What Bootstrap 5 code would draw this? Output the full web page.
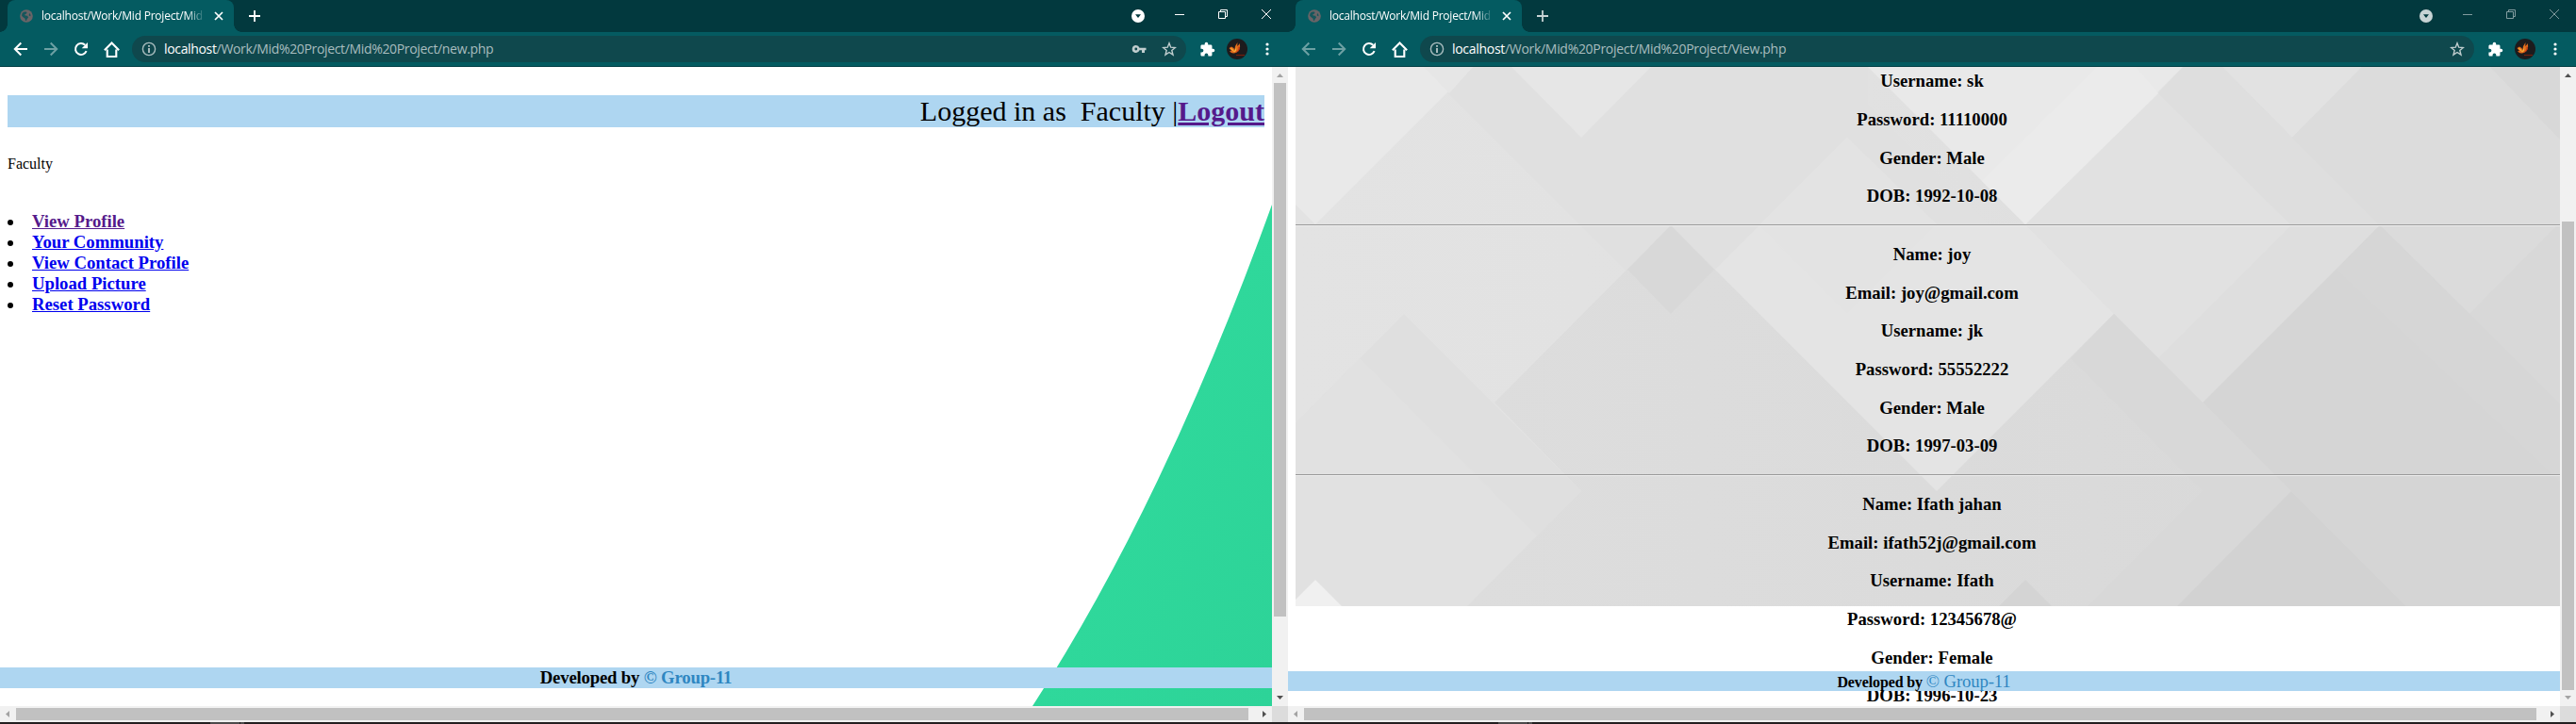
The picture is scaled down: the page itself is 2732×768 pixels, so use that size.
<!DOCTYPE html>
<html lang="en">
<head>
<meta charset="utf-8">
<title>Mid Project</title>
<link href="https://cdn.jsdelivr.net/npm/bootstrap@5.3.0/dist/css/bootstrap.min.css" rel="stylesheet">
<style>
body{width:2732px;height:768px;overflow:hidden;background:#fff;color:#000}
.win{width:1366px;height:768px}
.tabstrip{height:34px;background:#02393e;padding-left:8px;color:#fff}
.tabitem{width:240px;height:34px;background:#045b61;border-radius:8px 8px 0 0;padding-left:13px}
.tabitem::before,.tabitem::after{content:"";position:absolute;bottom:0;width:8px;height:8px}
.tabitem::before{left:-8px;background:radial-gradient(circle at 0 0,#02393e 7.5px,#045b61 8px)}
.tabitem::after{right:-8px;background:radial-gradient(circle at 100% 0,#02393e 7.5px,#045b61 8px)}
.tabtitle{font:12px/16px "Open Sans",sans-serif;letter-spacing:-.22px;width:175px;margin-left:9px;white-space:nowrap;overflow:hidden;-webkit-mask-image:linear-gradient(90deg,#000 154px,transparent 174px)}
.tabx{width:18px}
.capbtn{width:46px;height:29px}
.drop{width:42px}
.inactive .capbtn{opacity:.5}
.inactive .drop,.inactive .plus{opacity:.78}
.toolbar36{height:37px;background:#045b61;border-bottom:1px solid #023f45;padding:0 6px;color:#fff}
.tb{width:32px}
.dim{opacity:.42}
.omni{width:1118px;height:28px;border-radius:14px;background:#0f484d;margin:0 6px;padding:0 10px 0 10px;color:#a9bdbf}
.url{font:14px/20px "Open Sans",sans-serif;letter-spacing:-.34px;margin-left:8px;white-space:nowrap}
.inactive .url{letter-spacing:-.3px}
.url b{font-weight:400;color:#fff}
.view{height:678px}
.page{width:1349px;font-family:"Liberation Serif",serif}
.vbar{width:17px;background:#f1f1f1}
.hbar{height:17px;background:#f1f1f1}
.thumb{background:#c1c1c1}
.vbar .thumb{width:13px}
.hbar .thumb{height:13px}
.arr{width:17px;height:17px}
.corner{width:17px;height:17px;background:#dcdcdc}
.taskline{height:2px;background:linear-gradient(90deg,#231f20 223px,#4c4a4b 223px 254px,#231f20 254px 255px,#4c4a4b 255px 259px,#231f20 259px)}
.userband{margin:30px 8px 0;height:34px;background:#aed6f1;font-size:30px;line-height:34px;white-space:pre}
.userband a{font-weight:700;color:#551a8b}
.role{margin:30px 8px 41px;font-size:16px;line-height:18px}
.menu{margin:0 8px;font-size:18.72px;font-weight:700;line-height:22px}
.menu li::before{content:"";width:6px;height:6px;border-radius:50%;background:#000;margin:2px 20px 0 0}
.menu a{color:#00e}
.menu a.seen{color:#551a8b}
.foot{left:0;width:1349px;background:#aed6f1;font-weight:700;text-align:center;white-space:pre}
.foot span{color:#2e86c1}
.foot-a{bottom:19px;height:22px;font-size:18.72px;line-height:22px;letter-spacing:-.17px}
.foot-b{bottom:16px;height:21px;font-size:16px;line-height:21px;letter-spacing:-.12px}
.foot-b span{font-size:18.72px;font-weight:400}
.records{padding-top:4.2px;width:1366px;height:678px;font-size:18.72px;font-weight:700;text-align:center}
.records p{margin:0 0 18.72px;line-height:22px}
.rule{margin:0 0 18.72px 8px;width:1341px;height:2px;border-top:1px solid #9a9a9a;border-bottom:1px solid #eee}
.art{left:0;top:0}
.art.right{left:8px}
</style>
</head>
<body class="d-flex">
<svg width="0" height="0" class="position-absolute">
<defs>
<symbol id="globe" viewBox="0 0 16 16"><circle cx="8" cy="8" r="7.800" fill="#696467"/><path d="M3 4.600C5 2.800 7 2.600 8.600 3.400L8 5.200 6 6l.5 1.500 2.800.3 1 1.800-1.600 2-.6 1.900-1.300.2-.4-2.700L3.800 9.200 2.400 7.600C2.400 6.400 2.600 5.300 3 4.600zM11.500 4.400l1.700 2.400-.4 1.400-1.700-.8z" fill="#14565b"/></symbol>
<symbol id="close8" viewBox="0 0 10 10"><path d="M1 1l8 8M9 1L1 9" stroke="#fff" stroke-width="1.7"/></symbol>
<symbol id="plus" viewBox="0 0 12 12"><path d="M6 0v12M0 6h12" stroke="#fff" stroke-width="1.8"/></symbol>
<symbol id="drop" viewBox="0 0 14 14"><circle cx="7" cy="7" r="7" fill="#fff"/><path d="M4 5.200h6L7 9z" fill="#02393e"/></symbol>
<symbol id="min" viewBox="0 0 10 10"><path d="M0 5.500h10" stroke="#fff"/></symbol>
<symbol id="rest" viewBox="0 0 10 10"><path d="M.5 2.500h7v7h-7zM2.500 2.500V.5h7v7h-2" fill="none" stroke="#fff"/></symbol>
<symbol id="x10" viewBox="0 0 10 10"><path d="M0 0l10 10M10 0L0 10" stroke="#fff"/></symbol>
<symbol id="back" viewBox="0 0 16 16"><path d="M15 8H2M8.300 1.500L1.800 8l6.500 6.500" fill="none" stroke="#fff" stroke-width="2"/></symbol>
<symbol id="fwd" viewBox="0 0 16 16"><path d="M1 8h13M7.700 1.500L14.200 8l-6.500 6.500" fill="none" stroke="#fff" stroke-width="2"/></symbol>
<symbol id="reload" viewBox="0 0 16 16"><path d="M13.600 10.200a6 6 0 1 1-1.300-6.400" fill="none" stroke="#fff" stroke-width="2"/><path d="M15 1v6.300H8.700z" fill="#fff"/></symbol>
<symbol id="home" viewBox="0 0 16 16"><path d="M3.500 8v7h9V8M.8 8.600L8 1.400l7.200 7.200" fill="none" stroke="#fff" stroke-width="2"/></symbol>
<symbol id="info" viewBox="0 0 16 16"><circle cx="8" cy="8" r="6.600" fill="none" stroke="#a9bdbf" stroke-width="1.400"/><path d="M8 7v5M8 4v1.700" stroke="#c4d0d1" stroke-width="1.700"/></symbol>
<symbol id="key" viewBox="0 0 16 16"><path fill-rule="evenodd" d="M4.800 4a4 4 0 1 0 3.700 5.300H11V12h3V9.300h1.500V6.700H8.500A4 4 0 0 0 4.800 4zm0 2.600a1.400 1.400 0 1 1 0 2.800 1.400 1.400 0 0 1 0-2.800z" fill="#c0cdce"/></symbol>
<symbol id="star" viewBox="0 0 16 16"><path d="M8 1.800l1.700 4.400 4.700.3-3.600 3 1.200 4.600L8 11.500l-4 2.600 1.200-4.600-3.600-3 4.700-.3z" fill="none" stroke="#c0cdce" stroke-width="1.400"/></symbol>
<symbol id="puzzle" viewBox="0 0 24 24"><path d="M20.500 11H19V7c0-1.100-.9-2-2-2h-4V3.500a2.500 2.500 0 0 0-5 0V5H4c-1.100 0-2 .9-2 2v3.800h1.500a2.700 2.700 0 0 1 0 5.400H2V20c0 1.100.9 2 2 2h3.800v-1.500a2.700 2.700 0 0 1 5.400 0V22H17c1.100 0 2-.9 2-2v-4h1.500a2.500 2.500 0 0 0 0-5z" fill="#fff"/></symbol>
<symbol id="ava" viewBox="0 0 22 22"><circle cx="11" cy="11" r="11" fill="#1d1b1d"/><path d="M2.500 10l2.500-1.500L7.500 10l.8 2L9 8l2.500-4-.3 4 1.600-1.500L13.500 5c1.300 3.500.6 7.500-2.800 9.500-3.500 1.800-6.500.8-7.700-1.200l2-.3z" fill="#e06a1c"/><path d="M3.500 10l2.500.5 2 3 2.300-5-.3 4.500-2 1.500z" fill="#f3b13a"/><path d="M12.500 8.500c.7 3-.5 5-3.500 6 3.500 0 5-2.500 4.800-5.500z" fill="#b92c12"/><path d="M10 17.500h9" stroke="#74200f" stroke-width="1.200"/></symbol>
<symbol id="dots" viewBox="0 0 4 14"><circle cx="2" cy="2" r="1.600" fill="#fff"/><circle cx="2" cy="7" r="1.600" fill="#fff"/><circle cx="2" cy="12" r="1.600" fill="#fff"/></symbol>
<symbol id="up" viewBox="0 0 17 17"><path d="M5 11h7L8.500 7z"/></symbol>
<symbol id="down" viewBox="0 0 17 17"><path d="M5 6h7l-3.500 4z"/></symbol>
<symbol id="left" viewBox="0 0 17 17"><path d="M10 5v7L6 8.500z"/></symbol>
<symbol id="right" viewBox="0 0 17 17"><path d="M7 5v7l4-3.500z"/></symbol>
<linearGradient id="gr" x1="0" y1="0" x2="1" y2="1"><stop offset=".5" stop-color="#2fd89b"/><stop offset="1" stop-color="#2dd398"/></linearGradient>
<linearGradient id="base" x1="0" y1="0" x2="1" y2="0"><stop offset="0" stop-color="#e3e3e3"/><stop offset=".45" stop-color="#e1e1e1"/><stop offset="1" stop-color="#dadada"/></linearGradient>
<linearGradient id="low" x1="0" y1="0" x2="1" y2="0"><stop offset="0" stop-color="#dddddd"/><stop offset=".5" stop-color="#dbdbdb"/><stop offset="1" stop-color="#d8d8d8"/></linearGradient>
</defs></svg>

<section class="win d-flex flex-column flex-shrink-0">
  <div class="tabstrip d-flex align-items-start">
    <div class="tabitem position-relative d-flex align-items-center"><svg width="14" height="14"><use href="#globe"/></svg><span class="tabtitle">localhost/Work/Mid Project/Mid</span><span class="tabx d-flex justify-content-end"><svg width="10" height="10"><use href="#close8"/></svg></span></div>
    <div class="plus d-flex align-items-center h-100 ms-3"><svg width="12" height="12"><use href="#plus"/></svg></div>
    <div class="ms-auto drop d-flex h-100 align-items-center justify-content-center"><svg width="14" height="14"><use href="#drop"/></svg></div>
    <div class="capbtn d-flex align-items-center justify-content-center"><svg width="10" height="10"><use href="#min"/></svg></div>
    <div class="capbtn d-flex align-items-center justify-content-center"><svg width="10" height="10"><use href="#rest"/></svg></div>
    <div class="capbtn d-flex align-items-center justify-content-center"><svg width="10" height="10"><use href="#x10"/></svg></div>
  </div>
  <div class="toolbar36 d-flex align-items-center">
    <span class="tb d-flex justify-content-center"><svg width="16" height="16"><use href="#back"/></svg></span>
    <span class="tb d-flex justify-content-center dim"><svg width="16" height="16"><use href="#fwd"/></svg></span>
    <span class="tb d-flex justify-content-center"><svg width="16" height="16"><use href="#reload"/></svg></span>
    <span class="tb d-flex justify-content-center"><svg width="17" height="17"><use href="#home"/></svg></span>
    <div class="omni d-flex align-items-center"><svg width="16" height="16"><use href="#info"/></svg><span class="url"><b>localhost</b>/Work/Mid%20Project/Mid%20Project/new.php</span><svg class="ms-auto me-3" width="16" height="16"><use href="#key"/></svg><svg width="16" height="16"><use href="#star"/></svg></div>
    <span class="tb d-flex justify-content-center"><svg width="17" height="17"><use href="#puzzle"/></svg></span>
    <span class="tb d-flex justify-content-center"><svg width="22" height="22"><use href="#ava"/></svg></span>
    <span class="tb d-flex justify-content-center"><svg width="4" height="14"><use href="#dots"/></svg></span>
  </div>
  <div class="view d-flex">
    <main class="page position-relative overflow-hidden">
      <svg class="art position-absolute" width="1349" height="678"><path d="M1349 146Q1235 462 1095 678H1349z" fill="url(#gr)"/></svg>
      <div class="position-relative">
        <div class="userband text-end">Logged in as  Faculty |<a href="#">Logout</a></div>
        <p class="role">Faculty</p>
        <ul class="menu list-unstyled">
          <li class="d-flex align-items-center"><a class="seen" href="#">View Profile</a></li>
          <li class="d-flex align-items-center"><a href="#">Your Community</a></li>
          <li class="d-flex align-items-center"><a href="#">View Contact Profile</a></li>
          <li class="d-flex align-items-center"><a href="#">Upload Picture</a></li>
          <li class="d-flex align-items-center"><a href="#">Reset Password</a></li>
        </ul>
      </div>
      <footer class="foot foot-a position-absolute">Developed by <span>© Group-11</span></footer>
    </main>
    <div class="vbar d-flex flex-column align-items-center"><svg class="arr" fill="#a3a3a3"><use href="#up"/></svg><div class="thumb" style="height:566px"></div><svg class="arr mt-auto" fill="#505050"><use href="#down"/></svg></div>
  </div>
  <div class="hbar d-flex align-items-center"><svg class="arr" fill="#a3a3a3"><use href="#left"/></svg><div class="thumb" style="width:1307px"></div><svg class="arr ms-auto" fill="#505050"><use href="#right"/></svg><div class="corner"></div></div>
  <div class="taskline"></div>
</section>

<section class="win inactive d-flex flex-column flex-shrink-0">
  <div class="tabstrip d-flex align-items-start">
    <div class="tabitem position-relative d-flex align-items-center"><svg width="14" height="14"><use href="#globe"/></svg><span class="tabtitle">localhost/Work/Mid Project/Mid</span><span class="tabx d-flex justify-content-end"><svg width="10" height="10"><use href="#close8"/></svg></span></div>
    <div class="plus d-flex align-items-center h-100 ms-3"><svg width="12" height="12"><use href="#plus"/></svg></div>
    <div class="ms-auto drop d-flex h-100 align-items-center justify-content-center"><svg width="14" height="14"><use href="#drop"/></svg></div>
    <div class="capbtn d-flex align-items-center justify-content-center"><svg width="10" height="10"><use href="#min"/></svg></div>
    <div class="capbtn d-flex align-items-center justify-content-center"><svg width="10" height="10"><use href="#rest"/></svg></div>
    <div class="capbtn d-flex align-items-center justify-content-center"><svg width="10" height="10"><use href="#x10"/></svg></div>
  </div>
  <div class="toolbar36 d-flex align-items-center">
    <span class="tb d-flex justify-content-center dim"><svg width="16" height="16"><use href="#back"/></svg></span>
    <span class="tb d-flex justify-content-center dim"><svg width="16" height="16"><use href="#fwd"/></svg></span>
    <span class="tb d-flex justify-content-center"><svg width="16" height="16"><use href="#reload"/></svg></span>
    <span class="tb d-flex justify-content-center"><svg width="17" height="17"><use href="#home"/></svg></span>
    <div class="omni d-flex align-items-center"><svg width="16" height="16"><use href="#info"/></svg><span class="url"><b>localhost</b>/Work/Mid%20Project/Mid%20Project/View.php</span><svg class="ms-auto" width="16" height="16"><use href="#star"/></svg></div>
    <span class="tb d-flex justify-content-center"><svg width="17" height="17"><use href="#puzzle"/></svg></span>
    <span class="tb d-flex justify-content-center"><svg width="22" height="22"><use href="#ava"/></svg></span>
    <span class="tb d-flex justify-content-center"><svg width="4" height="14"><use href="#dots"/></svg></span>
  </div>
  <div class="view d-flex">
    <main class="page position-relative overflow-hidden">
      <svg class="art right position-absolute" width="1341" height="572">
        <rect width="1341" height="572" fill="url(#base)"/>
        <path d="M134 0L706 572H800L968 400 607 40V0z" fill="#e0e0e0"/>
        <path d="M585 75L398 262 680 450 868 262 774 167 680 167z" fill="#e4e4e4"/>
        <path d="M585 75L492 168 585 262 680 167z" fill="#e3e3e3"/>
        <path d="M774 167L941 0 1148 207 962 393 868 262z" fill="#e1e1e1"/>
        <path d="M941 0H983L1150 168 1056 168 915 28z" fill="#dedede"/>
        <path d="M0 0H188L21 167 0 146z" fill="#e9e9e9"/>
        <path d="M136 0H188L163 28z" fill="#e6e6e6"/>
        <path d="M229 0H377L303 75z" fill="#e6e6e6"/>
        <path d="M607 0H941L774 167z" fill="#e9e9e9"/>
        <path d="M850 0H891L915 28 774 167 728 121z" fill="#ebebeb"/>
        <path d="M983 0H1131L1057 75z" fill="#e2e2e2"/>
        <path d="M1131 0H1341V168H1150L1057 75z" fill="#dcdcdc"/>
        <path d="M1267 0H1341V77z" fill="#d8d8d8"/>
        <path d="M1056 168H1150L962 356 915 309z" fill="#dedede"/>
        <path d="M1150 168H1338L1245 262z" fill="#dbdbdb"/>
        <path d="M1338 168H1341V400L1245 262z" fill="#d8d8d8"/>
        <path d="M0 378L115 262 303 450 182 572H0z" fill="#dfdfdf"/>
        <path d="M0 378L68 309 330 572H0z" fill="#e1e1e1"/>
        <path d="M398 168L680 450 868 262 1178 572H182L303 450 211 356z" fill="url(#low)"/>
        <path d="M398 168L444 215 398 262 352 215z" fill="#d8d8d8"/>
        <path d="M868 262L962 356 1056 450 935 572H840L962 450 822 309z" fill="#d8d8d8"/>
        <path d="M1150 168L1245 262 1341 358V572H1178L962 356z" fill="#d5d5d5"/>
        <path d="M1150 168L1245 262 1341 358V440L1104 215z" fill="#d6d6d6"/>
        <path d="M1056 450L1178 572H935z" fill="#d2d2d2"/>
        <path d="M774 544L802 572H746z" fill="#d4d4d4"/>
        <path d="M21 544L49 572H0V565z" fill="#f0f0f0"/>
      </svg>
      <div class="records position-relative">
        <p>Username: sk</p><p>Password: 11110000</p><p>Gender: Male</p><p>DOB: 1992-10-08</p>
        <div class="rule"></div>
        <p>Name: joy</p><p>Email: joy@gmail.com</p><p>Username: jk</p><p>Password: 55552222</p><p>Gender: Male</p><p>DOB: 1997-03-09</p>
        <div class="rule"></div>
        <p>Name: Ifath jahan</p><p>Email: ifath52j@gmail.com</p><p>Username: Ifath</p><p>Password: 12345678@</p><p>Gender: Female</p><p>DOB: 1996-10-23</p>
      </div>
      <footer class="foot foot-b position-absolute">Developed by <span>© Group-11</span></footer>
    </main>
    <div class="vbar d-flex flex-column align-items-center"><svg class="arr" fill="#505050"><use href="#up"/></svg><div class="thumb mt-auto" style="height:497px"></div><svg class="arr" fill="#a3a3a3"><use href="#down"/></svg></div>
  </div>
  <div class="hbar d-flex align-items-center"><svg class="arr" fill="#a3a3a3"><use href="#left"/></svg><div class="thumb" style="width:1307px"></div><svg class="arr ms-auto" fill="#505050"><use href="#right"/></svg><div class="corner"></div></div>
  <div class="taskline"></div>
</section>
<script src="https://cdn.jsdelivr.net/npm/bootstrap@5.3.0/dist/js/bootstrap.bundle.min.js"></script>
</body>
</html>
